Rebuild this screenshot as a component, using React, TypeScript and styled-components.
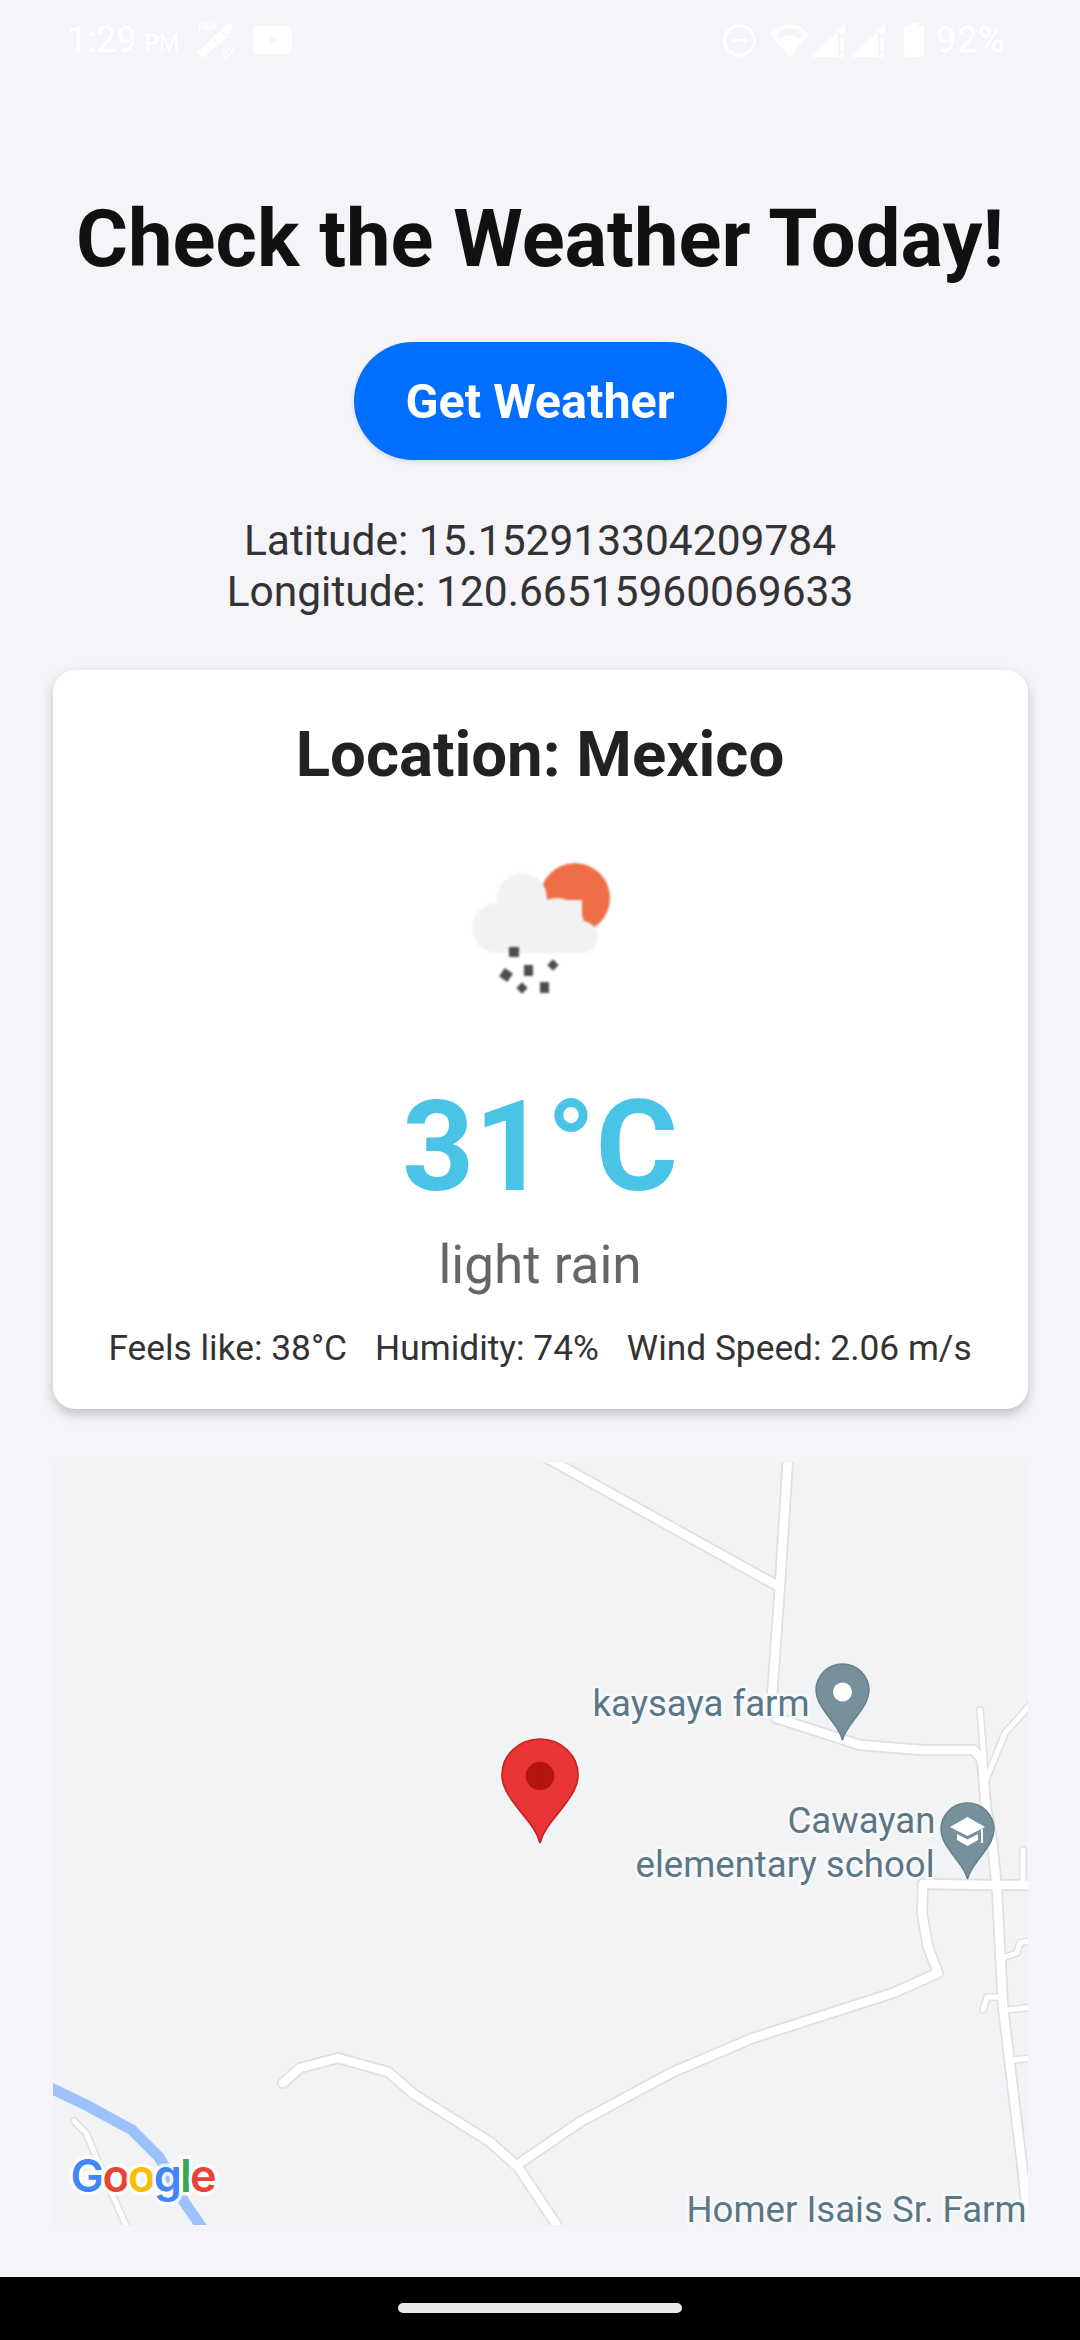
import React from "react";
import styled, { createGlobalStyle } from "styled-components";

const Global = createGlobalStyle`
  html, body { margin: 0; padding: 0; background: #f4f4f9; }
  body { font-family: Roboto, "Liberation Sans", sans-serif; }
`;

const Screen = styled.div`
  width: 1080px;
  height: 2340px;
  display: flex;
  flex-direction: column;
  align-items: center;
  background: #f4f4f9;
  overflow: hidden;
`;

const StatusBar = styled.div`
  width: 100%;
  height: 80px;
  flex: none;
  box-sizing: border-box;
  padding: 0 75px 0 67px;
  display: flex;
  align-items: center;
  color: #fff;
`;

const Time = styled.span`
  font-size: 36px;
  line-height: 80px;
  font-weight: 400;
`;

const Meridiem = styled.span`
  font-size: 23px;
  margin-left: 8px;
  margin-right: 17px;
  padding-top: 6px;
`;

const FakeWrap = styled.span`
  position: relative;
  width: 38px;
  height: 38px;
  margin-right: 19px;
`;

const FakeText = styled.span`
  position: absolute;
  left: 2px;
  top: 0;
  font-size: 11px;
  line-height: 12px;
  font-weight: 700;
`;

const Spacer = styled.span`
  flex: 1;
`;

const Battery = styled.span`
  font-size: 36px;
  margin-left: 12px;
  letter-spacing: 0.6px;
`;

const StatusIcon = styled.svg`
  display: block;
  flex: none;
  margin-left: ${(p: { $gap?: number }) => p.$gap ?? 0}px;
`;

const Title = styled.h1`
  margin: 114px 0 0;
  font-size: 79.5px;
  line-height: 90px;
  font-weight: 700;
  color: #111;
  white-space: nowrap;
`;

const WeatherButton = styled.button`
  margin-top: 58px;
  width: 373px;
  height: 118px;
  border: 0;
  border-radius: 59px;
  background: #006eff;
  color: #fff;
  font-family: inherit;
  font-size: 48.5px;
  font-weight: 700;
  box-shadow: 0 2px 5px rgba(0, 0, 0, 0.12);
`;

const Coordinates = styled.div`
  margin-top: 55px;
  font-size: 42.5px;
  line-height: 51px;
  color: #333;
  text-align: center;
`;

const Card = styled.section`
  margin-top: 53px;
  width: 975px;
  height: 739px;
  flex: none;
  box-sizing: border-box;
  padding-top: 49px;
  background: #fff;
  border-radius: 22px;
  box-shadow: 0 5px 12px rgba(0, 0, 0, 0.22);
  display: flex;
  flex-direction: column;
  align-items: center;
`;

const CardTitle = styled.h2`
  margin: 0;
  font-size: 63.5px;
  line-height: 72px;
  font-weight: 700;
  color: #222;
`;

const WeatherIcon = styled.svg`
  display: block;
  flex: none;
  margin-top: 64px;
  filter: blur(1px);
`;

const Temperature = styled.div`
  margin-top: 72px;
  font-size: 126px;
  line-height: 140px;
  font-weight: 700;
  color: #4ac4e6;
`;

const Condition = styled.div`
  margin-top: 17px;
  font-size: 53px;
  line-height: 62px;
  color: #666;
`;

const Details = styled.div`
  margin-top: 32px;
  display: flex;
  gap: 28px;
  font-size: 35.3px;
  line-height: 40px;
  color: #333;
`;

const MapFrame = styled.div`
  position: relative;
  margin-top: 53px;
  width: 975px;
  height: 763px;
  flex: none;
  background: #f2f3f5;
`;

const MapDrawing = styled.svg`
  display: block;
`;

const MapLabel = styled.span<{ $x: number; $y: number }>`
  position: absolute;
  left: ${(p) => p.$x - 53}px;
  top: ${(p) => p.$y - 1462}px;
  font-size: 36.6px;
  line-height: 30px;
  color: #5b7786;
  white-space: nowrap;
  -webkit-text-stroke: 5px #f8f9fa;
  paint-order: stroke fill;
`;

const GoogleMark = styled.div`
  position: absolute;
  left: 18px;
  top: 684px;
  font-family: Inter, "Open Sans", sans-serif;
  font-size: 45px;
  line-height: 60px;
  font-weight: 600;
  letter-spacing: -1.8px;
  -webkit-text-stroke: 7px rgba(255, 255, 255, 0.8);
  paint-order: stroke fill;
`;

const GoogleLetter = styled.span<{ $c: string }>`
  color: ${(p) => p.$c};
`;

const NavBar = styled.div`
  margin-top: auto;
  width: 100%;
  height: 63px;
  flex: none;
  background: #000;
  display: flex;
  justify-content: center;
  padding-top: 26px;
  box-sizing: border-box;
`;

const NavPill = styled.div`
  width: 284px;
  height: 10px;
  border-radius: 5px;
  background: #e8e8e8;
`;

const majorRoads = [
  "547,1458 776,1585",
  "788,1458 780,1585 772,1697 776,1718 860,1745 922,1750 974,1750 982,1760 986,1807 992,1840 997,1890 1003,2007 1013,2090 1023,2173 1029,2230",
  "923,1884 992,1885 1034,1885",
  "923,1884 922,1913 928,1947 938,1973 893,1993 753,2038 673,2072 580,2122 520,2163",
  "283,2083 300,2068 338,2058 388,2072 415,2095 490,2142 518,2167 560,2230",
];

const minorRoads = [
  "980,1710 984,1757",
  "1033,1702 1005,1733 986,1780",
  "1023,1850 1023,1885",
  "1005,1957 1017,1953 1020,1943 1033,1940",
  "997,1997 987,1997 983,2010",
  "1007,2010 1033,2007",
  "1012,2060 1033,2058",
  "74,2121 86,2133 109,2187 128,2230",
];

const PIN = "M26.5 0C11.9 0 0 11.7 0 26.3 0 35 4.6 41.5 11 50.5 17.5 59.6 24 66 26.5 76 29 66 35.5 59.6 42 50.5 48.4 41.5 53 35 53 26.3 53 11.7 41.1 0 26.5 0Z";

export default function App() {
  return (
    <Screen>
      <Global />
      <StatusBar>
        <Time>1:29</Time>
        <Meridiem>PM</Meridiem>
        <FakeWrap>
          <FakeText>FAK</FakeText>
          <svg width="38" height="38" viewBox="0 0 38 38" fill="#fff">
            <path d="M25 9 32 2 37 7 31 14Z" />
            <path d="M17 16 24 10 30 16 23 23Z" />
            <path d="M1 31 16 17 22 24 7 37Z" />
            <path d="M26 33a8 8 0 0 0 7-7M26 37a12 12 0 0 0 11-11M26 29a4 4 0 0 0 3-3" fill="none" stroke="#fff" strokeWidth="1.6" />
          </svg>
        </FakeWrap>
        <svg width="39" height="28" viewBox="0 0 39 28">
          <path fill="#fff" fillRule="evenodd" d="M6 0H33C37 0 39 2 39 6V22C39 26 37 28 33 28H6C2 28 0 26 0 22V6C0 2 2 0 6 0ZM16 9V19L25 14Z" />
        </svg>
        <Spacer />
        <StatusIcon width="33" height="33" viewBox="0 0 33 33">
          <circle cx="16.5" cy="16.5" r="14.8" fill="none" stroke="#fff" strokeWidth="3" />
          <rect x="9" y="15" width="15" height="3" fill="#fff" />
        </StatusIcon>
        <StatusIcon $gap={14} width="39" height="33" viewBox="0 0 39 33">
          <path fill="#fff" fillRule="evenodd" d="M19.5 33 0 10C5 4 12 0 19.5 0S34 4 39 10ZM6 10.5 10 15C12.5 12.5 16 11 19.5 11S26.500 12.500 29 15L33 10.500C29 6.500 24.500 4 19.500 4S10 6.500 6 10.500Z" />
        </StatusIcon>
        <StatusIcon $gap={3} width="33" height="33" viewBox="0 0 33 33">
          <path fill="#fff" d="M33 0V9H26V33H0ZM28 14H32V26H28ZM28 29H32V33H28Z" />
        </StatusIcon>
        <StatusIcon $gap={7} width="33" height="33" viewBox="0 0 33 33">
          <path fill="#fff" d="M33 0V9H26V33H0ZM28 14H32V26H28ZM28 29H32V33H28Z" />
        </StatusIcon>
        <StatusIcon $gap={19} width="20" height="34" viewBox="0 0 20 34">
          <path fill="#fff" fillRule="evenodd" d="M6 0H14V3H18C19 3 20 4 20 5V32C20 33 19 34 18 34H2C1 34 0 33 0 32V5C0 4 1 3 2 3H6ZM3 7V8H17V7Z" />
        </StatusIcon>
        <Battery>92%</Battery>
      </StatusBar>

      <Title>Check the Weather Today!</Title>
      <WeatherButton>Get Weather</WeatherButton>
      <Coordinates>
        Latitude: 15.152913304209784
        <br />
        Longitude: 120.66515960069633
      </Coordinates>

      <Card>
        <CardTitle>Location: Mexico</CardTitle>
        <WeatherIcon width="160" height="150" viewBox="460 855 160 150">
          <circle cx="575" cy="898" r="35" fill="#ee6e47" />
          <g fill="#f2f2f2">
            <circle cx="522" cy="898" r="25" />
            <circle cx="497" cy="928" r="25" />
            <circle cx="557" cy="925" r="27" />
            <circle cx="582" cy="937" r="16" />
            <rect x="497" y="900" width="85" height="53" />
          </g>
          <g fill="#4d4d4d">
            <rect x="509" y="947" width="10" height="10" />
            <rect x="501" y="970" width="10" height="10" transform="rotate(35 506 975)" />
            <rect x="524" y="965" width="9" height="11" />
            <rect x="549" y="961" width="8" height="8" transform="rotate(45 553 965)" />
            <rect x="518" y="984" width="8" height="8" transform="rotate(45 522 988)" />
            <rect x="540" y="982" width="9" height="11" />
          </g>
        </WeatherIcon>
        <Temperature>31°C</Temperature>
        <Condition>light rain</Condition>
        <Details>
          <span>Feels like: 38°C</span>
          <span>Humidity: 74%</span>
          <span>Wind Speed: 2.06 m/s</span>
        </Details>
      </Card>

      <MapFrame>
        <MapDrawing width="975" height="763" viewBox="53 1462 975 763">
          <polyline points="40,2083 86,2105 132,2130 159,2157 185,2203 205,2232" fill="none" stroke="#9dc1fb" strokeWidth="11" />
          <g fill="none" strokeLinecap="round" strokeLinejoin="round">
            {minorRoads.map((r) => (
              <polyline key={r} points={r} stroke="#dfe0e3" strokeWidth="8" />
            ))}
            {majorRoads.map((r) => (
              <polyline key={r} points={r} stroke="#dfe0e3" strokeWidth="12" />
            ))}
            {minorRoads.map((r) => (
              <polyline key={r} points={r} stroke="#fff" strokeWidth="5" />
            ))}
            {majorRoads.map((r) => (
              <polyline key={r} points={r} stroke="#fff" strokeWidth="8.5" />
            ))}
          </g>
          <g transform="translate(816 1664)">
            <path d={PIN} fill="#78909c" stroke="#64808e" strokeWidth="1.5" />
            <circle cx="26.500" cy="28" r="9.500" fill="#fff" />
          </g>
          <g transform="translate(941 1803)">
            <path d={PIN} fill="#78909c" stroke="#64808e" strokeWidth="1.5" />
            <path fill="#fff" d="M26.500 14 44 24 26.500 33 9 24Z" />
            <path fill="#fff" d="M16 31 26.500 36.500 37 31V37L26.500 43 16 37Z" />
            <rect x="40" y="26" width="2" height="14" fill="#fff" />
          </g>
          <g transform="translate(502 1739) scale(1.434 1.368)">
            <path d={PIN} fill="#e93535" stroke="#c5221f" strokeWidth="1.2" />
            <ellipse cx="26.500" cy="27" rx="10" ry="10.300" fill="#b31412" />
          </g>
        </MapDrawing>
        <MapLabel $x={593} $y={1689}>kaysaya farm</MapLabel>
        <MapLabel $x={788} $y={1806}>Cawayan</MapLabel>
        <MapLabel $x={636} $y={1850}>elementary school</MapLabel>
        <MapLabel $x={687} $y={2195}>Homer Isais Sr. Farm</MapLabel>
        <GoogleMark>
          <GoogleLetter $c="#4285f4">G</GoogleLetter>
          <GoogleLetter $c="#ea4335">o</GoogleLetter>
          <GoogleLetter $c="#fbbc05">o</GoogleLetter>
          <GoogleLetter $c="#4285f4">g</GoogleLetter>
          <GoogleLetter $c="#34a853">l</GoogleLetter>
          <GoogleLetter $c="#ea4335">e</GoogleLetter>
        </GoogleMark>
      </MapFrame>

      <NavBar>
        <NavPill />
      </NavBar>
    </Screen>
  );
}
